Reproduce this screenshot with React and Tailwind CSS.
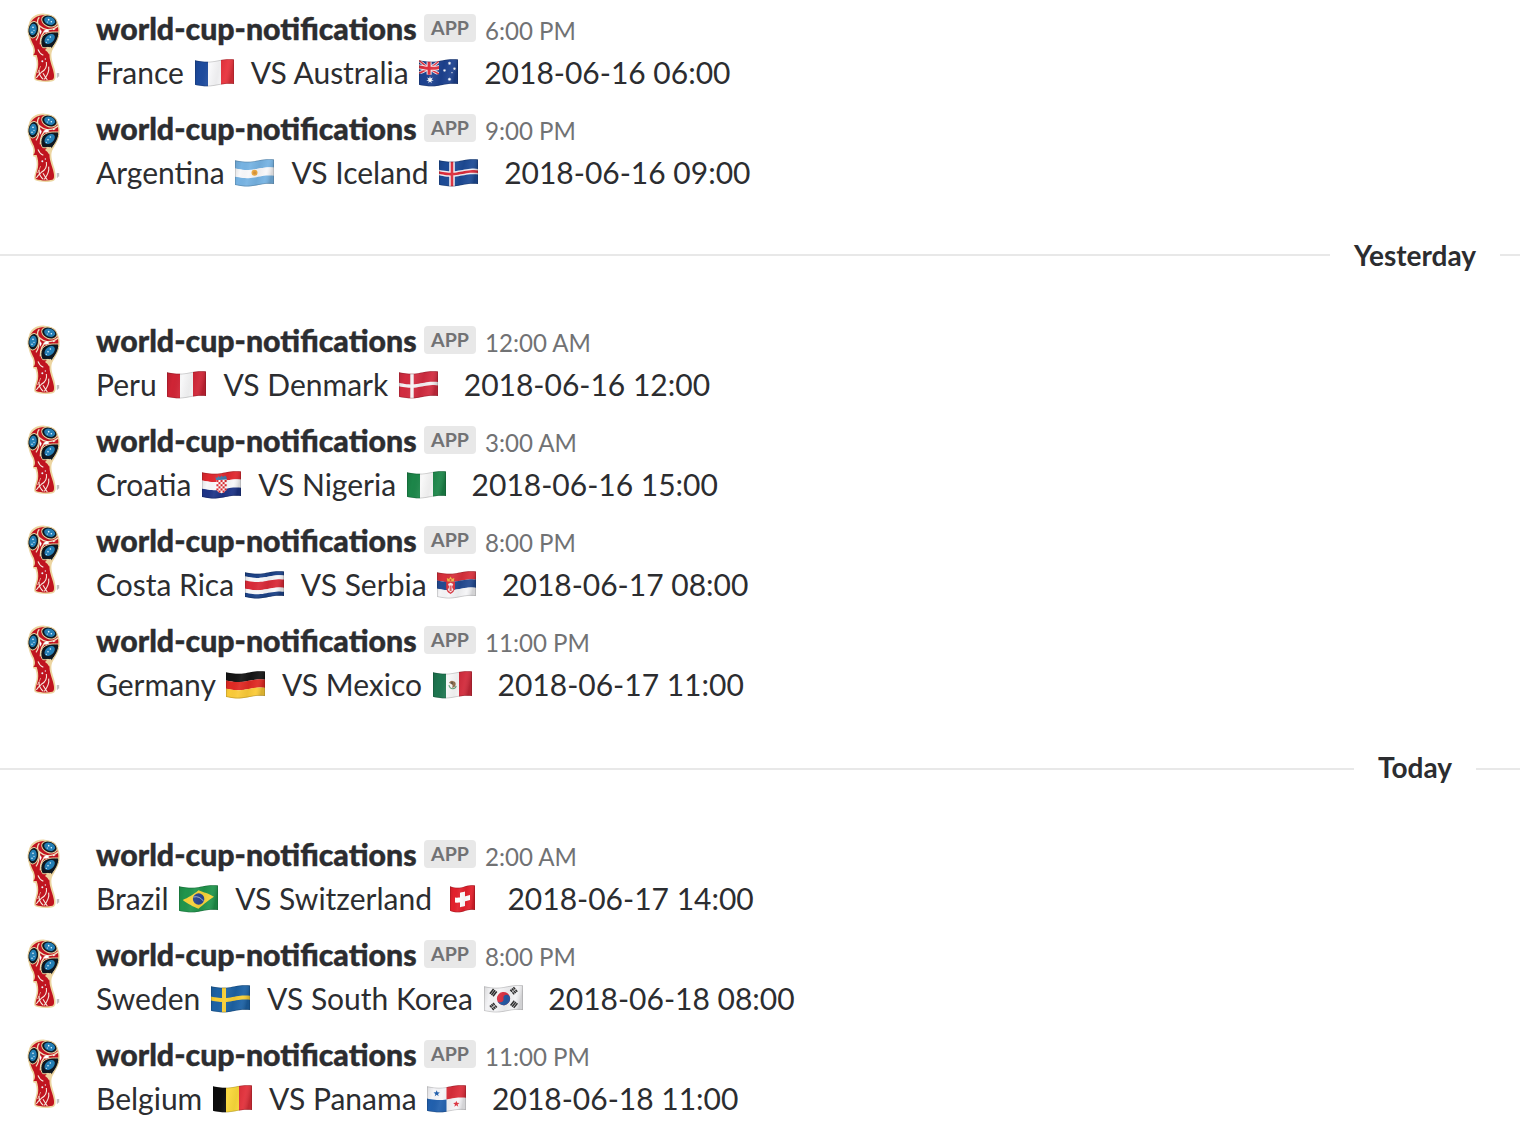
import React from "react";

const W = 39;
const H = 24.5;
const wave = (x) => 1.5 + 1.35 * Math.sin(((x - 1) / W) * Math.PI * 2 * 0.88);

// Bends a polygon along the cloth's wave, sampling each edge.
function bend(points, width = W) {
  const out = [];
  points.forEach(([x0, y0], i) => {
    const [x1, y1] = points[(i + 1) % points.length];
    const n = Math.max(1, Math.ceil(Math.abs(x1 - x0) / 2));
    for (let k = 0; k < n; k++) {
      const x = x0 + ((x1 - x0) * k) / n;
      const y = y0 + ((y1 - y0) * k) / n;
      out.push(`${x.toFixed(2)},${(y + wave((x * W) / width)).toFixed(2)}`);
    }
  });
  return out.join(" ");
}

function Rect({ x = 0, y = 0, w = W, h = H, c, width = W }) {
  return (
    <polygon
      fill={c}
      points={bend([[x, y], [x + w, y], [x + w, y + h], [x, y + h]], width)}
    />
  );
}

function Poly({ p, c }) {
  return <polygon fill={c} points={bend(p)} />;
}

function Star({ x, y, r, c = "#fff", n = 5 }) {
  const pts = [];
  for (let i = 0; i < n * 2; i++) {
    const a = (Math.PI * i) / n - Math.PI / 2;
    const q = i % 2 ? r * 0.42 : r;
    pts.push(`${(x + q * Math.cos(a)).toFixed(2)},${(y + wave(x) + q * Math.sin(a)).toFixed(2)}`);
  }
  return <polygon fill={c} points={pts.join(" ")} />;
}

const V = ({ c }) => c.map((k, i) => <Rect key={i} x={(i * W) / 3} w={W / 3 + 0.1} c={k} />);
const Hz = ({ c, s = [1, 1, 1] }) => {
  const total = s.reduce((a, b) => a + b, 0);
  let y = 0;
  return c.map((k, i) => {
    const h = (H * s[i]) / total;
    const el = <Rect key={i} y={y} h={h + 0.1} c={k} />;
    y += h;
    return el;
  });
};
const Cross = ({ c, t, x = 12 }) => (
  <>
    <Rect x={x - t / 2} w={t} c={c} />
    <Rect y={H / 2 - t / 2} h={t} c={c} />
  </>
);

const flags = {
  france: <V c={["#1d4b9e", "#f8f8fa", "#e8323c"]} />,
  peru: <V c={["#cf2435", "#f7f7f8", "#cf2435"]} />,
  nigeria: <V c={["#1c8649", "#f8f8f8", "#1c8649"]} />,
  belgium: <V c={["#0c0c0c", "#fbd93a", "#e2303a"]} />,
  germany: <Hz c={["#151515", "#e02a24", "#fbcb38"]} />,
  costarica: <Hz c={["#1b4186", "#f8f8fa", "#d92a38", "#f8f8fa", "#1b4186"]} s={[1, 1, 2, 1, 1]} />,
  australia: (
    <>
      <Rect c="#1d4290" />
      <Poly p={[[0, 0], [2.5, 0], [20, 11], [20, 13], [17.5, 13], [0, 2]]} c="#f3e8ee" />
      <Poly p={[[20, 0], [17.5, 0], [0, 11], [0, 13], [2.5, 13], [20, 2]]} c="#f3e8ee" />
      <Poly p={[[0, 0], [1.2, 0], [20, 12], [20, 13], [18.8, 13], [0, 1]]} c="#e0303e" />
      <Poly p={[[20, 0], [18.8, 0], [0, 12], [0, 13], [1.2, 13], [20, 1]]} c="#e0303e" />
      <Rect x={7.6} w={5} h={13} c="#f6eef2" />
      <Rect y={4} w={20} h={5} c="#f6eef2" />
      <Rect x={8.6} w={3} h={13} c="#e0303e" />
      <Rect y={5} w={20} h={3} c="#e0303e" />
      <Star x={11} y={18} r={3.8} n={7} />
      <Star x={30.5} y={4} r={2} n={7} />
      <Star x={25.5} y={10.5} r={1.9} n={7} />
      <Star x={35.5} y={9.5} r={1.9} n={7} />
      <Star x={30.5} y={20} r={2.1} n={7} />
      <Star x={33} y={13.5} r={1} />
    </>
  ),
  argentina: (
    <>
      <Hz c={["#76b3e3", "#f8f8fa", "#76b3e3"]} />
      <circle cx="19.5" cy="13.8" r="3" fill="#efaa3e" />
      <circle cx="19.5" cy="13.8" r="1.5" fill="#d9923a" />
    </>
  ),
  iceland: (
    <>
      <Rect c="#1d4b96" />
      <Cross c="#f1eef4" t={5.6} x={13} />
      <Cross c="#dc2c3b" t={2.6} x={13} />
    </>
  ),
  denmark: (
    <>
      <Rect c="#d22c40" />
      <Cross c="#f6f2f4" t={3.4} x={13} />
    </>
  ),
  sweden: (
    <>
      <Rect c="#1c62a5" />
      <Cross c="#f9cf35" t={4} x={13} />
    </>
  ),
  croatia: (
    <>
      <Hz c={["#e0282f", "#f8f8fa", "#1d3487"]} />
      <polygon points="13.5,5.5 15,7 16.5,5 18,6.4 19.5,4.6 21,6 23,4.4 24.5,6 25,8.8 14,9.3" fill="#3f78a8" />
      <path d="M14.3 9.3L24.7 8.6V17.4Q23.5 21.3 19.4 22.2Q15.2 21.3 14.3 18Z" fill="#fff" />
      {[0, 1, 2, 3, 4, 5].map((r) =>
        [0, 1, 2, 3, 4].map((k) =>
          (r + k) % 2 === 0 && !(r === 5 && (k === 0 || k === 4)) ? (
            <rect key={`${r}-${k}`} x={14.4 + k * 2.05} y={9 + r * 2.1} width="2.05" height="2.1" fill="#e0282f" />
          ) : null
        )
      )}
    </>
  ),
  serbia: (
    <>
      <Hz c={["#d8303b", "#234a91", "#f5f5f7"]} />
      <path d="M9.2 11H18V17.5Q17 21.5 13.6 23Q10 21.5 9.2 17.5Z" fill="#d9303b" />
      <path d="M11 13L13.6 11.7L16.2 13L15 16L16.5 19L13.6 21.5L10.7 19L12.2 16Z" fill="#f5eaec" />
      <path d="M12.6 14.5H14.6V20H12.6Z" fill="#dc5960" />
      <path d="M10.4 10.4L9.8 7L12 8L13.5 5.6L15 8L17.3 7L16.8 10.4Z" fill="#edb640" />
      <circle cx="13.5" cy="9" r="1" fill="#d3423c" />
    </>
  ),
  mexico: (
    <>
      <V c={["#1e7650", "#f8f8f8", "#d22a3b"]} />
      <path d="M16 11.8Q18 8.8 20.5 10.2Q23.5 11 22.4 14.6Q21.8 17 19 16.7Q20.5 14.7 18.9 13.6Z" fill="#94714f" />
      <path d="M16 14Q16.4 17.6 19.8 17.7Q22.8 17.4 23.2 14.8" fill="none" stroke="#69a37b" strokeWidth="1.1" />
      <circle cx="19" cy="12" r="1" fill="#5b5143" />
    </>
  ),
  brazil: (
    <>
      <Rect c="#20954c" />
      <Poly p={[[3.7, 13], [19.5, 3.2], [35, 11.5], [19.5, 21.5]]} c="#f7d238" />
      <circle cx="19.6" cy="14" r="5.7" fill="#29458f" />
      <path d="M14.4 12Q20.5 10.5 24.7 16.4" fill="none" stroke="#b9c8df" strokeWidth="0.8" />
    </>
  ),
  korea: (
    <>
      <Rect c="#f3f3f5" />
      <g transform="rotate(-8 19.5 13.6)">
        <circle cx="19.5" cy="13.6" r="6.6" fill="#d92e40" />
        <path d="M12.9 13.6A3.3 3.3 0 0 0 19.5 13.6A3.3 3.3 0 0 1 26.1 13.6A6.6 6.6 0 0 1 12.9 13.6Z" fill="#2459a5" />
      </g>
      {[[9.3, 7.6, -52], [29.8, 5.8, 50], [9.4, 21.5, 50], [30, 19.3, -52]].map(([x, y, a]) => (
        <g key={`${x}`} transform={`translate(${x} ${y}) rotate(${a})`} stroke="#292929" strokeWidth="1.5">
          <path d="M-3 -2H3M-3 0H3M-3 2H3" strokeDasharray={a > 0 ? "2.7 0.6" : undefined} />
        </g>
      ))}
    </>
  ),
  panama: (
    <>
      <Rect c="#f6f6f9" />
      <Rect x={W / 2} w={W / 2} h={H / 2} c="#dc2e3b" />
      <Rect y={H / 2} w={W / 2} h={H / 2} c="#2160ae" />
      <Star x={9.7} y={5.7} r={3.3} c="#2160ae" />
      <Star x={29.3} y={18.5} r={3.3} c="#dc2e3b" />
    </>
  ),
};

function Flag({ name }) {
  const square = name === "switzerland";
  const w = square ? 25 : W;
  return (
    <span className="mt-px inline-flex h-7 w-[44.8px] shrink-0 justify-start pl-[3px]">
      <svg
        width={w}
        height="28"
        viewBox={`0 0 ${w} 28`}
        className={square ? "ml-[7px] block shrink-0" : "block shrink-0"}
      >
        {square ? (
          <>
            <Rect w={25} width={25} c="#e3202c" />
            <Rect x={10} y={5} w={5} h={14.5} width={25} c="#fff" />
            <Rect x={5} y={9.8} w={15} h={5} width={25} c="#fff" />
          </>
        ) : (
          flags[name]
        )}
        <Rect w={w} width={w} c="url(#cloth)" />
        <polygon
          points={bend([[0.3, 0.3], [w - 0.3, 0.3], [w - 0.3, H - 0.3], [0.3, H - 0.3]], w)}
          fill="none"
          stroke="#000"
          strokeOpacity="0.2"
          strokeWidth="0.8"
        />
      </svg>
    </span>
  );
}

function Trophy() {
  return (
    <svg viewBox="45 36 111 213" width="37" height="71" className="ml-[25px] mt-3 block">
      <path
        d="M56 74C60 52 78 39 104 41C131 42 149 63 149 91C149 116 135 137 126 153C121 168 127 184 132 201C137 220 141 238 130 243C115 248 91 247 76 241C68 236 76 219 79 204C82 190 79 180 76 170C62 172 74 158 68 141C57 122 51 98 56 74Z"
        fill="#ecd5a0"
      />
      <path
        d="M59 76C64 57 82 45 104 45C129 47 145 66 145 91C144 114 128 137 121 151C115 167 121 185 127 203C133 222 135 236 127 239C112 243 92 242 78 237C74 231 82 214 84 202C86 188 84 177 80 165L70 165C79 154 73 146 72 138C61 119 55 98 59 76Z"
        fill="#c0141f"
      />
      <path
        d="M88 52C80 60 81 72 89 78C88 100 84 114 78 121M89 78Q99 87 111 89Q130 90 144 78M111 89C99 97 90 112 91 133"
        fill="none"
        stroke="#efe0bd"
        strokeWidth="4"
      />
      <ellipse cx="118" cy="63" rx="24" ry="17" transform="rotate(22 118 63)" fill="#101820" stroke="#e7cf9c" strokeWidth="3" />
      <ellipse cx="119" cy="62" rx="17" ry="12" transform="rotate(20 119 62)" fill="#247eb4" />
      <ellipse cx="70" cy="89" rx="16" ry="25" transform="rotate(8 70 89)" fill="#101820" stroke="#e7cf9c" strokeWidth="3" />
      <ellipse cx="69" cy="88" rx="11" ry="17" transform="rotate(8 69 88)" fill="#247eb4" />
      <path d="M146 96C148 115 135 132 125 145C116 139 108 145 98 143C90 133 91 115 101 105C115 94 131 96 146 96Z" fill="#101820" stroke="#e7cf9c" strokeWidth="3" />
      <ellipse cx="119" cy="117" rx="18" ry="12" transform="rotate(-42 119 117)" fill="#247eb4" />
      <path d="M105 150Q110 146 112 140Q117 145 122 140L126 150Q121 156 118 164Q112 154 105 150Z" fill="#ecd5a0" />
      <path d="M111 87L119 94L108 98L99 94Z" fill="#fff" />
      <path d="M92 87L95 95L91 104L89 95ZM129 86L137 87L130 91Z" fill="#fff" />
      <path
        d="M84 148Q88 160 100 166M109 186Q113 206 94 217Q84 225 79 234M116 200Q119 217 103 238M87 210Q86 226 100 238M99 220Q106 232 112 240"
        fill="none"
        stroke="#f6ebe0"
        strokeWidth="3.2"
      />
      <path d="M92 198Q88 210 82 219" fill="none" stroke="#f0d9bd" strokeWidth="2" />
      <g fill="#e8f7ff">
        <circle cx="116" cy="59" r="2.5" />
        <circle cx="124" cy="65" r="2.3" />
        <circle cx="112" cy="66" r="1.8" />
        <circle cx="69" cy="82" r="2.4" />
        <circle cx="72" cy="91" r="1.8" />
        <circle cx="66" cy="97" r="2.3" />
        <circle cx="121" cy="111" r="2.4" />
        <circle cx="114" cy="119" r="2.3" />
        <circle cx="109" cy="127" r="1.8" />
        <circle cx="97" cy="184" r="3" />
        <circle cx="106" cy="177" r="2" />
      </g>
      <path d="M142 219V233M146 219V230" stroke="#8f8f8f" strokeWidth="2" />
    </svg>
  );
}

function Message({ time, home, homeFlag, away, awayFlag, date }) {
  return (
    <article className="flex h-[100px]">
      <div className="w-24 shrink-0">
        <Trophy />
      </div>
      <div className="whitespace-pre">
        <header className="mt-[6px] flex h-11 items-baseline">
          <span className="w-80 text-[30.3px] font-black leading-[44px] [-webkit-text-stroke:0.4px_#2c2d30]">
            world-cup-notifications
          </span>
          <span className="relative -top-[5px] ml-2 flex h-7 w-[52px] items-center justify-center rounded bg-[#e8e8e8] text-[19.6px] font-bold leading-7 text-[#717274]">
            APP
          </span>
          <span className="ml-[9px] text-[24.1px] leading-[44px] text-[#717274]">{time}</span>
        </header>
        <p className="flex h-11 items-center text-[30px] leading-[44px]">
          <span>{home} </span>
          <Flag name={homeFlag} />
          <span>{"  VS "}{away} </span>
          <Flag name={awayFlag} />
          <span>{"   "}{date}</span>
        </p>
      </div>
    </article>
  );
}

function Divider({ label, className, tail, labelClass }) {
  return (
    <div className={`flex items-center ${className}`}>
      <span className="h-[2px] flex-1 bg-[#e8e8e8]" />
      <span className={`mx-6 text-[28px] font-bold leading-8 ${labelClass}`}>{label}</span>
      <span className={`h-[2px] bg-[#e8e8e8] ${tail}`} />
    </div>
  );
}

export default function App() {
  return (
    <main className="h-[1138px] w-[1520px] overflow-hidden bg-white font-['Lato',sans-serif] text-[#2c2d30]">
      <svg width="0" height="0" className="absolute">
        <defs>
          <linearGradient id="cloth" x1="0" x2="1" y1="0" y2="0.15">
            <stop offset="0" stopColor="#000" stopOpacity="0.12" />
            <stop offset="0.2" stopColor="#000" stopOpacity="0" />
            <stop offset="0.42" stopColor="#fff" stopOpacity="0.06" />
            <stop offset="0.65" stopColor="#000" stopOpacity="0.05" />
            <stop offset="0.85" stopColor="#fff" stopOpacity="0.05" />
            <stop offset="1" stopColor="#000" stopOpacity="0.14" />
          </linearGradient>
        </defs>
      </svg>
      <Message time="6:00 PM" home="France" homeFlag="france" away="Australia" awayFlag="australia" date="2018-06-16 06:00" />
      <Message time="9:00 PM" home="Argentina" homeFlag="argentina" away="Iceland" awayFlag="iceland" date="2018-06-16 09:00" />
      <Divider label="Yesterday" className="mb-[2px] h-[110px]" tail="w-5" labelClass="" />
      <Message time="12:00 AM" home="Peru" homeFlag="peru" away="Denmark" awayFlag="denmark" date="2018-06-16 12:00" />
      <Message time="3:00 AM" home="Croatia" homeFlag="croatia" away="Nigeria" awayFlag="nigeria" date="2018-06-16 15:00" />
      <Message time="8:00 PM" home="Costa Rica" homeFlag="costarica" away="Serbia" awayFlag="serbia" date="2018-06-17 08:00" />
      <Message time="11:00 PM" home="Germany" homeFlag="germany" away="Mexico" awayFlag="mexico" date="2018-06-17 11:00" />
      <Divider label="Today" className="h-[114px]" tail="w-11" labelClass="mb-1" />
      <Message time="2:00 AM" home="Brazil" homeFlag="brazil" away="Switzerland" awayFlag="switzerland" date="2018-06-17 14:00" />
      <Message time="8:00 PM" home="Sweden" homeFlag="sweden" away="South Korea" awayFlag="korea" date="2018-06-18 08:00" />
      <Message time="11:00 PM" home="Belgium" homeFlag="belgium" away="Panama" awayFlag="panama" date="2018-06-18 11:00" />
    </main>
  );
}
